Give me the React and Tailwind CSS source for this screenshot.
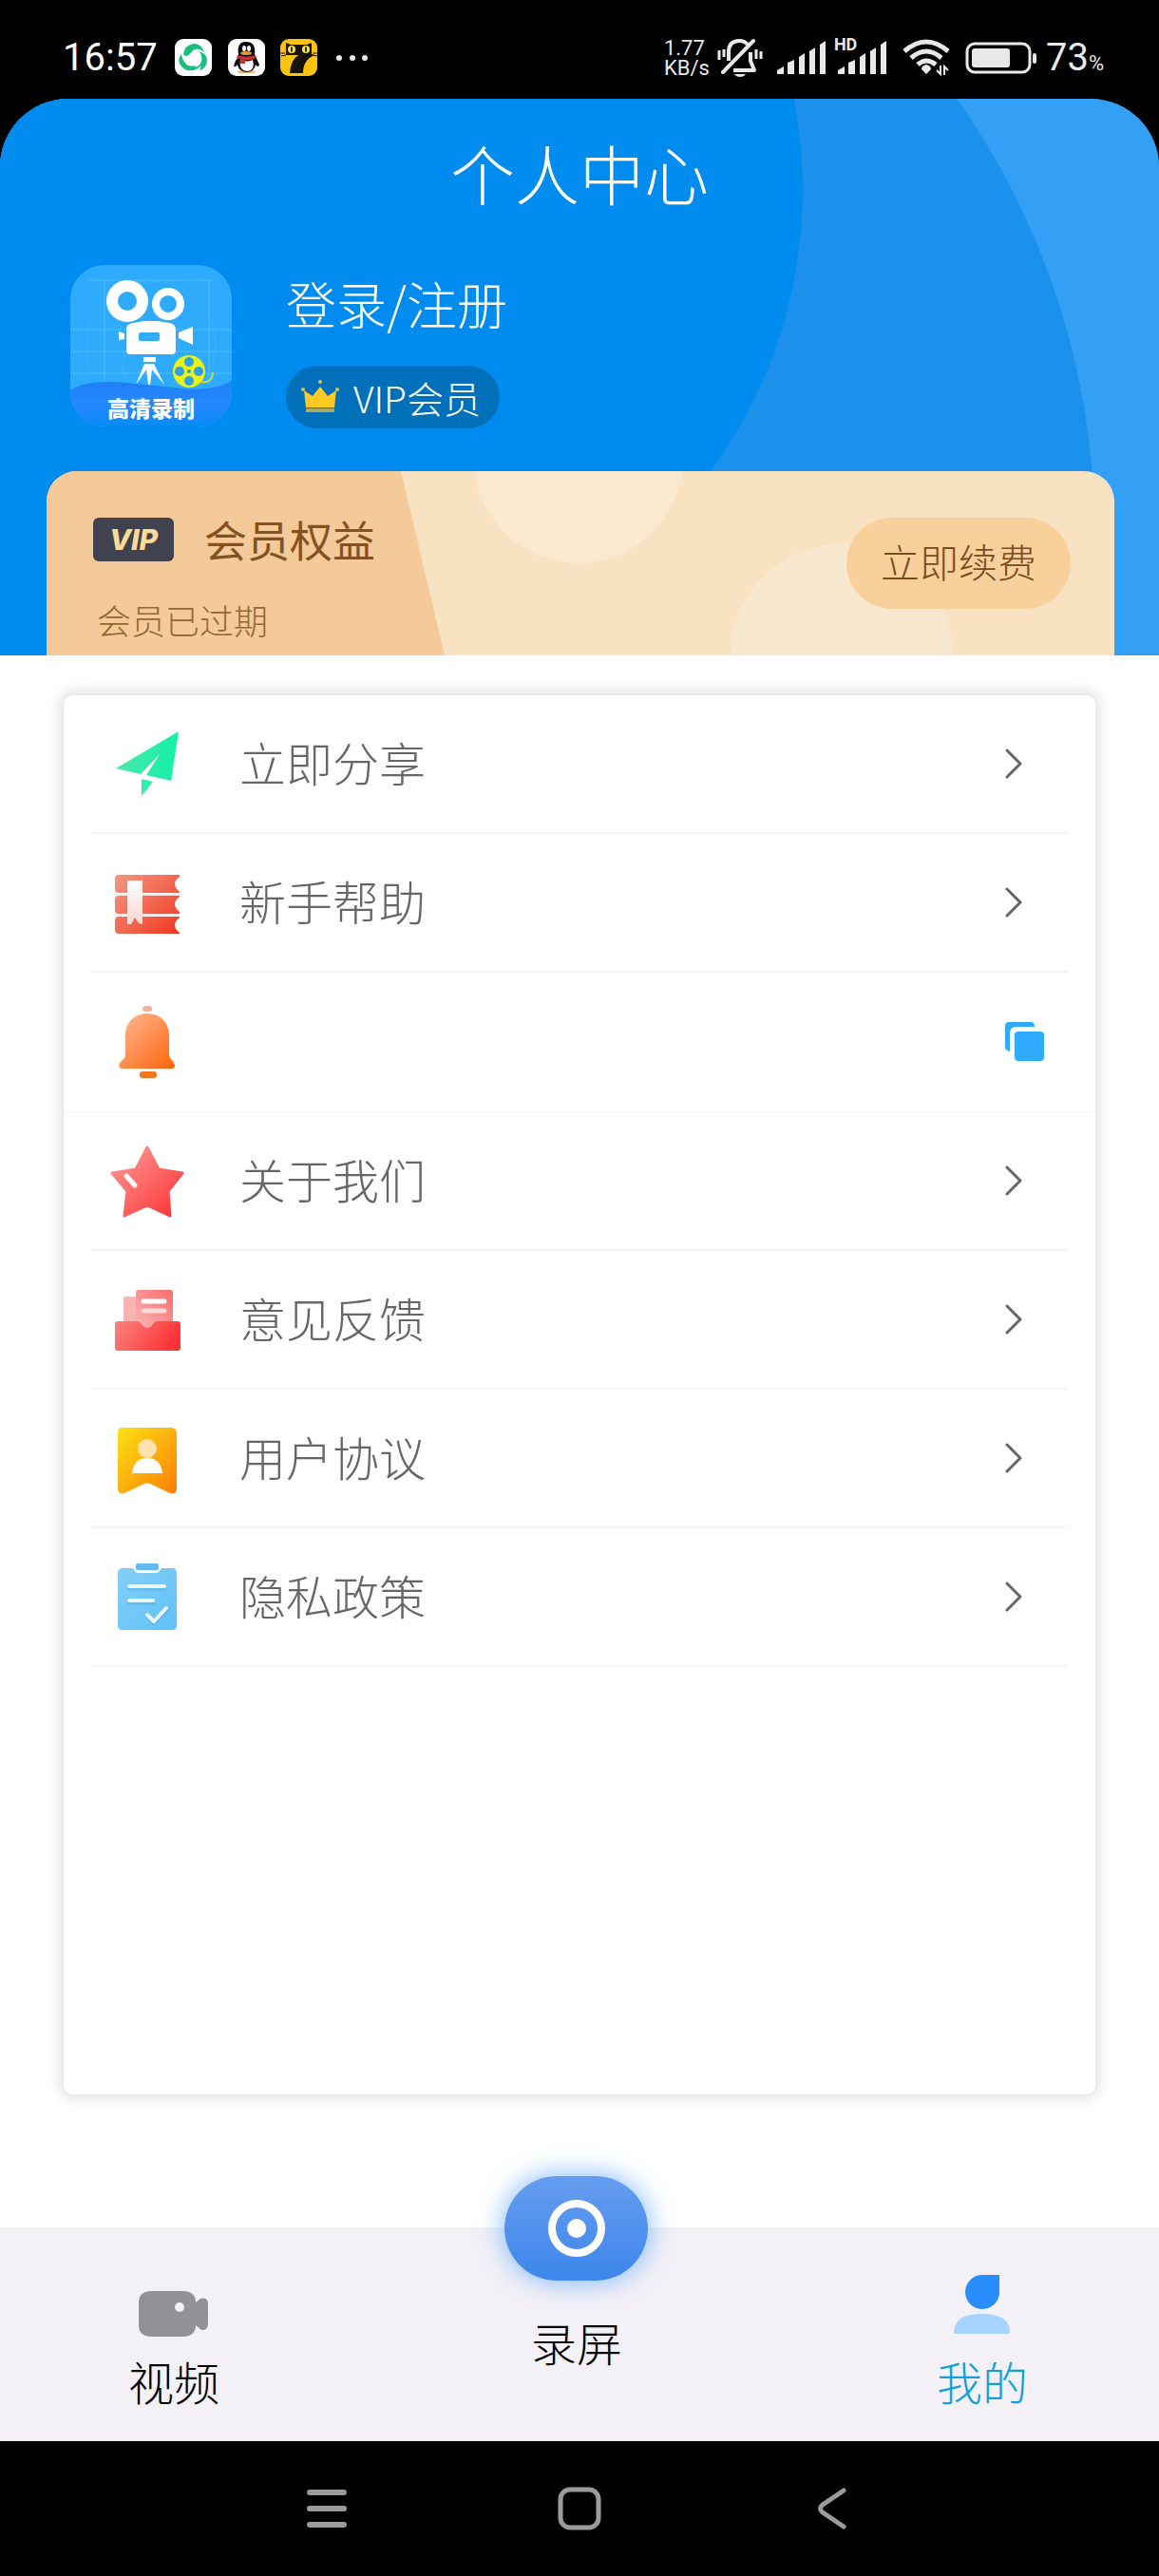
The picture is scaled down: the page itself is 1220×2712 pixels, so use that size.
import { useState } from 'react';

const PaperPlaneIcon = () => (
  <svg viewBox="0 0 80 80" className="w-20 h-20">
    <defs>
      <linearGradient id="plane" x1="0" y1="0" x2="1" y2="0">
        <stop offset="0" stopColor="#4be8ae" />
        <stop offset="1" stopColor="#14f0a6" />
      </linearGradient>
    </defs>
    <path d="M73 6 65 58 39 52 53 30 33 51 7 45Z" fill="url(#plane)" />
    <path d="M34 56 46 59 34 74Z" fill="#35edb0" />
  </svg>
);

const BooksIcon = () => (
  <svg viewBox="0 -2 80 80" className="w-20 h-20">
    <defs>
      <linearGradient id="books" gradientUnits="userSpaceOnUse" x1="8" y1="10" x2="70" y2="72">
        <stop offset="0" stopColor="#f59680" />
        <stop offset="1" stopColor="#f03a24" />
      </linearGradient>
      <linearGradient id="ribbon" x1="0" y1="0" x2="0" y2="1">
        <stop offset="0" stopColor="#fff" />
        <stop offset="1" stopColor="#fad6d2" />
      </linearGradient>
    </defs>
    <g fill="url(#books)">
      <path d="M10 9H74V11Q64 18 74 27V28H10Q6 28 6 24V13Q6 9 10 9Z" />
      <path d="M10 31H74V32Q64 40 74 48V50H10Q6 50 6 46V35Q6 31 10 31Z" />
      <path d="M10 53H74V54Q64 62 74 70V71H10Q6 71 6 67V57Q6 53 10 53Z" />
    </g>
    <path d="M6 29H74V31H6ZM6 50H74V52H6Z" fill="#fde3df" />
    <path d="M20 15H35V61L31 60 27 54 23 61H19V17Z" fill="url(#ribbon)" />
  </svg>
);

const BellIcon = () => (
  <svg viewBox="0 0 80 80" className="w-20 h-20">
    <defs>
      <linearGradient id="bell" x1="0" y1="0" x2="1" y2="1">
        <stop offset="0" stopColor="#ffb996" />
        <stop offset="1" stopColor="#ff6409" />
      </linearGradient>
    </defs>
    <rect x="35" y="2" width="10" height="6" rx="3" fill="#f5b19b" />
    <path
      d="M40 10C53 10 63 19 63 33V53Q63 56 65 58L68 62Q71 68 65 68H14Q9 68 11 62L15 58Q17 56 17 53V33C17 19 27 10 40 10Z"
      fill="url(#bell)"
    />
    <rect x="32" y="71" width="18" height="7" rx="3" fill="#f47522" />
  </svg>
);

const StarIcon = () => (
  <svg viewBox="0 -1 80 80" className="w-20 h-20">
    <defs>
      <linearGradient id="star" x1="0" y1="0" x2="1" y2="1">
        <stop offset="0.1" stopColor="#ff9391" />
        <stop offset="0.9" stopColor="#fd3b3c" />
      </linearGradient>
    </defs>
    <path
      d="M40 4 52 27 77 31 62 50 64 76 40 65 16 76 19 50 3 31 28 27Z"
      fill="url(#star)"
      stroke="url(#star)"
      strokeWidth="3"
      strokeLinejoin="round"
    />
    <path d="M18 34 27 44" stroke="#fff" strokeWidth="5" strokeLinecap="round" />
  </svg>
);

const InboxIcon = () => (
  <svg viewBox="0 -1 80 80" className="w-20 h-20">
    <defs>
      <linearGradient id="inbox" x1="0" y1="0" x2="1" y2="0.3">
        <stop offset="0" stopColor="#fb8480" />
        <stop offset="1" stopColor="#fb3537" />
      </linearGradient>
      <linearGradient id="sheet" x1="0" y1="1" x2="1" y2="0">
        <stop offset="0" stopColor="#fbbab8" />
        <stop offset="1" stopColor="#f96a6e" />
      </linearGradient>
    </defs>
    <rect x="15" y="15" width="22" height="35" rx="2" fill="#fbb3b2" />
    <rect x="28" y="8" width="39" height="44" rx="3" fill="url(#sheet)" />
    <path d="M36 20H58" stroke="#fff" strokeWidth="5" strokeLinecap="round" />
    <path d="M36 30H58" stroke="#fcd9d8" strokeWidth="5" strokeLinecap="round" />
    <path
      d="M9 41H29Q32 41 34 44 40 52 46 44 48 41 51 41H72Q75 41 75 44V69Q75 72 72 72H9Q6 72 6 69V44Q6 41 9 41Z"
      fill="url(#inbox)"
    />
  </svg>
);

const AgreementIcon = () => (
  <svg viewBox="0 -3 80 80" className="w-20 h-20">
    <defs>
      <linearGradient id="agreement" x1="0" y1="0" x2="1" y2="1">
        <stop offset="0" stopColor="#fae015" />
        <stop offset="0.5" stopColor="#fcb00d" />
        <stop offset="1" stopColor="#ff7e00" />
      </linearGradient>
    </defs>
    <path
      d="M14 5H65Q71 5 71 11V69Q71 76 64 74L45 65Q40 62 35 65L16 74Q9 76 9 69V10Q9 5 14 5Z"
      fill="url(#agreement)"
    />
    <path d="M24 53Q26 37 40 37T56 53Z" fill="#fff" />
    <circle cx="40" cy="27" r="10" fill="#fde2ae" />
  </svg>
);

const ClipboardIcon = () => (
  <svg viewBox="0 0 80 80" className="w-20 h-20">
    <defs>
      <linearGradient id="board" x1="0" y1="0" x2="1" y2="1">
        <stop offset="0" stopColor="#85cff7" />
        <stop offset="1" stopColor="#5fc1f8" />
      </linearGradient>
    </defs>
    <path
      d="M14 10H24Q26 10 27 13 28 15 31 15H49Q52 15 53 13L55 10H66Q71 10 71 15V70Q71 75 66 75H14Q9 75 9 70V15Q9 10 14 10Z"
      fill="url(#board)"
    />
    <rect x="28" y="5" width="24" height="7" rx="2" fill="#62b9f1" />
    <g fill="none" stroke="#3f9fd6" strokeOpacity="0.35" strokeWidth="5" strokeLinecap="round" strokeLinejoin="round">
      <path d="M21 31H58M21 46H46M41 60 47 67 61 54" />
    </g>
    <g fill="none" stroke="#e9f7ff" strokeWidth="4" strokeLinecap="round" strokeLinejoin="round">
      <path d="M21 29H58M21 44H46M40 59 47 66 60 52" />
    </g>
  </svg>
);

const ChevronIcon = () => (
  <svg viewBox="0 0 20 32" className="w-5 h-8 mr-7">
    <path d="M3 2 17 16 3 30" fill="none" stroke="#666" strokeWidth="3" strokeLinecap="round" strokeLinejoin="round" />
  </svg>
);

const CopyIcon = () => (
  <svg viewBox="0 0 42 42" className="w-[42px] h-[42px] mr-[5px]">
    <path d="M4 0H27Q31 0 31 5H12Q5 5 5 12V31Q0 30 0 26V4Q0 0 4 0Z" fill="#2fabfd" />
    <rect x="10" y="10" width="31" height="31" rx="4" fill="#2fabfd" />
  </svg>
);

const menu = [
  { icon: PaperPlaneIcon, label: '立即分享' },
  { icon: BooksIcon, label: '新手帮助' },
  { icon: BellIcon, label: '', copy: true },
  { icon: StarIcon, label: '关于我们' },
  { icon: InboxIcon, label: '意见反馈' },
  { icon: AgreementIcon, label: '用户协议' },
  { icon: ClipboardIcon, label: '隐私政策' },
];

const SignalIcon = () => (
  <svg viewBox="0 0 52 35" className="w-[52px] h-[35px]" fill="#e8e8e8">
    <path d="M0 35V31L7 27V35Z" />
    <path d="M11 35V23L18 20V35Z" />
    <path d="M23 35V17L29 13V35Z" />
    <path d="M34 35V11L40 7V35Z" />
    <path d="M45 35V4L51 0V35Z" />
  </svg>
);

const StatusBar = () => (
  <div className="h-[104px] bg-black text-[#e8e8e8] flex items-center justify-between pl-[66px] pr-[58px] pt-[17px] font-['Roboto','Noto_Sans_CJK_SC',sans-serif]">
    <div className="flex items-center">
      <span className="text-[40px] leading-[44px] text-white mr-[18px]">16:57</span>
      <svg viewBox="0 0 40 40" className="w-10 h-10 mr-4">
        <rect width="39" height="39" rx="9" fill="#fff" />
        <g fill="#18be7c">
          <path d="M9 17Q10 6 20 5 28 5 31 14 25 8 19 12 16 17 12 18Z" />
          <path d="M7 16Q8 24 14 28 18 29 22 28L20 33Q10 35 5 26 3 20 7 16Z" />
          <path d="M20 30Q30 28 28 18 28 15 25 13 32 14 34 21 34 31 26 33L28 28Q24 32 20 33Z" />
        </g>
      </svg>
      <svg viewBox="0 0 40 40" className="w-10 h-10 mr-[15px]">
        <rect width="39" height="39" rx="9" fill="#fff" />
        <path d="M10 34Q20 31 29 34L28 36H11Z" fill="#f0b878" />
        <path d="M11 16Q9 3 19 3 30 3 28 16L33 27Q32 31 29 27 28 34 20 35 11 34 10 27 7 31 6 28 7 23 11 19Z" fill="#0b0b10" />
        <path d="M13 22Q20 25 26 22 29 33 20 34 11 33 13 22Z" fill="#fff" />
        <ellipse cx="17" cy="10" rx="2" ry="3" fill="#fff" />
        <ellipse cx="22" cy="10" rx="2" ry="3" fill="#fff" />
        <ellipse cx="19" cy="15" rx="6" ry="2" fill="#e8992e" />
        <path d="M10 17Q20 20 29 17L30 20Q24 23 18 22V26H13V21L9 20Z" fill="#c9302c" />
      </svg>
      <svg viewBox="0 0 40 40" className="w-10 h-10">
        <rect width="39" height="39" rx="9" fill="#fcc30d" />
        <path d="M6 4 11 6H28L33 4V16L36 17Q24 22 24 36H10Q11 22 19 17H6Z" fill="#171307" />
        <ellipse cx="12" cy="11" rx="4" ry="4" fill="#f4e355" />
        <ellipse cx="27" cy="11" rx="4" ry="4" fill="#f4e355" />
        <ellipse cx="12" cy="11" rx="1" ry="3" fill="#171307" />
        <ellipse cx="27" cy="11" rx="1" ry="3" fill="#171307" />
        <path d="M0 15H5M1 18 6 17M34 15H39M34 17 39 18" stroke="#171307" />
      </svg>
      <svg viewBox="0 0 34 8" className="w-[34px] h-2 ml-[19px]" fill="#e8e8e8">
        <circle cx="3" cy="4" r="3" />
        <circle cx="17" cy="4" r="3" />
        <circle cx="30" cy="4" r="3" />
      </svg>
    </div>

    <div className="flex items-center">
      <div className="text-[22px] leading-[21px] mr-2">
        <div>1.77</div>
        <div>KB/s</div>
      </div>
      {/* muted bell */}
      <svg viewBox="0 0 48 42" className="w-12 h-[42px] mr-[15px]" fill="none" stroke="#e8e8e8" strokeWidth="4">
        <path d="M12 24V15Q12 3 23 3 29 3 32 7M35 15V24L39 34H17" strokeLinejoin="round" />
        <path d="M38 3 6 36" strokeLinecap="round" />
        <path d="M2 13V23M7 12V20M41 12V22M46 14V22" strokeWidth="3" />
        <path d="M18 38H30Q28 41 24 41T18 38Z" fill="#e8e8e8" stroke="none" />
      </svg>
      <SignalIcon />
      <div className="relative ml-3">
        <SignalIcon />
        <span className="absolute -left-1 -top-1 text-[18px] leading-4 font-bold">HD</span>
      </div>
      <svg viewBox="0 0 50 42" className="w-[50px] h-[42px] ml-4" fill="none" stroke="#e8e8e8" strokeWidth="5">
        <path d="M2 14Q25-6 48 14" />
        <path d="M9 21Q25 7 41 21" />
        <path d="M16 28Q25 20 35 28" />
        <path d="M25 28Q30 29 30 33L25 38 20 33Q20 29 25 28Z" fill="#e8e8e8" stroke="none" />
        <path d="M36 34 40 38V29M48 34 44 30V39" strokeWidth="2" />
      </svg>
      <svg viewBox="0 0 76 34" className="w-[76px] h-[34px] ml-4">
        <rect x="2" y="2" width="66" height="30" rx="8" fill="none" stroke="#e8e8e8" strokeWidth="3" />
        <rect x="7" y="7" width="40" height="20" rx="3" fill="#e8e8e8" />
        <rect x="71" y="12" width="4" height="11" rx="2" fill="#e8e8e8" />
      </svg>
      <span className="flex items-baseline ml-[9px]">
        <span className="text-[40px] leading-[44px]">73</span>
        <span className="text-[22px] leading-none">%</span>
      </span>
    </div>
  </div>
);

const AppLogo = () => (
  <svg viewBox="0 0 170 170" className="w-[170px] h-[170px] rounded-[36px] shrink-0">
    <defs>
      <linearGradient id="wave" x1="0" y1="0" x2="0" y2="1">
        <stop offset="0" stopColor="#1e80f4" />
        <stop offset="0.5" stopColor="#2688ff" />
        <stop offset="1" stopColor="#088bf3" />
      </linearGradient>
    </defs>
    <rect width="170" height="170" fill="#2fabfd" />
    <g fill="none" stroke="#66c4fe" strokeOpacity="0.6">
      <path d="M0 68H170M0 91H170M0 114H170M36 16V125M146 16V125M20 16H150" />
      <circle cx="85" cy="85" r="68" strokeOpacity="0.3" />
      <circle cx="85" cy="105" r="30" strokeOpacity="0.4" />
    </g>
    <circle cx="60" cy="38" r="16" fill="none" stroke="#fff" strokeWidth="12" />
    <circle cx="103" cy="41" r="13" fill="none" stroke="#fff" strokeWidth="8" />
    <path
      d="M66 61 78 59H92L104 61Q111 62 111 68V90Q111 94 107 94H63Q59 94 59 90V66Q60 62 66 61ZM74 71Q72 71 72 73V78Q72 80 74 80H92Q94 80 94 78V73Q94 71 92 71Z"
      fill="#fff"
      fillRule="evenodd"
    />
    <path d="M51 70 57 72V78L51 79ZM129 65V84L114 77V71Z" fill="#fff" />
    <path d="M77 97H90V102H77ZM78 104H88L99 126 86 110 84 126H82L80 110 69 126Z" fill="#fff" />
    <circle cx="125" cy="112" r="17" fill="#e8f314" />
    <path d="M138 123Q149 125 150 113" fill="none" stroke="#c8db3a" strokeWidth="2" />
    <g fill="#2fa0e0">
      <circle cx="125" cy="102" r="5" />
      <circle cx="125" cy="122" r="5" />
      <circle cx="115" cy="112" r="5" />
      <circle cx="135" cy="112" r="5" />
      <circle cx="125" cy="112" r="2" />
    </g>
    <path d="M0 132Q18 120 60 124T125 131Q155 131 170 122V170H0Z" fill="url(#wave)" />
    <text x="85" y="160" textAnchor="middle" className="text-[23px] font-black font-['Noto_Sans_CJK_SC',sans-serif]" fill="#fff">
      高清录制
    </text>
  </svg>
);

const Header = () => (
  <header className="bg-black">
    <div className="relative h-[586px] flex flex-col bg-[#008cee] rounded-t-[72px] overflow-hidden">
      <svg viewBox="0 104 1220 586" preserveAspectRatio="none" className="absolute inset-0 w-full h-full">
        <rect y="104" width="1220" height="586" fill="#339ff5" />
        <circle cx="362" cy="560" r="790" fill="#1b91eb" />
        <path d="M0 104H400V690H0Z" fill="#008cee" />
        <circle cx="345" cy="200" r="500" fill="#008cee" />
        <path d="M0 490H720V690H0Z" fill="#008cee" />
      </svg>

      <h1 className="relative text-[68px] leading-[96px] font-light text-white text-center mt-[30px]">个人中心</h1>

      <div className="relative flex items-start pl-[74px] mt-[49px]">
        <AppLogo />
        <div className="flex flex-col items-start ml-[57px] mt-1.5">
          <button className="text-[53px] leading-[68px] font-light text-white">登录/注册</button>
          <span className="flex items-center h-[66px] mt-8 pl-4 pr-5 rounded-full bg-[#0070bb] text-white">
            <svg viewBox="0 0 40 38" className="w-10 h-[38px] mr-[15px]">
              <path d="M3 12 12 18 20 8 28 18 37 12 35 30H5Z" fill="#ffcb22" />
              <path d="M5 31H35V35H5Z" fill="#a9ab62" />
              <g fill="#d8bf55">
                <circle cx="2" cy="11" r="2" />
                <circle cx="20" cy="3" r="2" />
                <circle cx="38" cy="11" r="2" />
              </g>
            </svg>
            <span className="text-[39px] leading-[56px] font-light">VIP会员</span>
          </span>
        </div>
      </div>

      <section className="relative flex-1 mt-[45px] ml-[49px] mr-[47px] rounded-t-[32px] overflow-hidden bg-[#f9e2c1] flex items-start justify-between pl-[49px] pr-[46px]">
        <svg viewBox="0 0 1124 194" preserveAspectRatio="none" className="absolute inset-0 w-full h-full">
          <path d="M0 0H373L419 194H0Z" fill="#f4ca9a" />
          <circle cx="560" cy="-13" r="110" fill="#fae8cf" />
          <circle cx="837" cy="194" r="117" fill="#f9e8d0" />
        </svg>
        <div className="relative">
          <div className="flex items-center mt-[42px]">
            <span className="w-[85px] h-[46px] rounded-md bg-[#40434f] text-[#fbd997] text-[30px] leading-[46px] font-extrabold italic text-center font-['Inter',sans-serif]">
              VIP
            </span>
            <h2 className="text-[45px] leading-[60px] text-[#85511f] ml-8">会员权益</h2>
          </div>
          <p className="text-[36px] leading-[48px] font-light text-[#9b6631] mt-[30px] ml-1">会员已过期</p>
        </div>
        <button className="relative h-24 mt-[49px] px-9 pb-1 rounded-full bg-[#f7d09c] text-[#7d4a1a] text-[41px] font-light">
          立即续费
        </button>
      </section>
    </div>
  </header>
);

const MenuRow = ({ item }) => {
  const Icon = item.icon;
  return (
    <li className={item.copy ? 'border-b border-[#f6f6f6]' : 'mx-[29px] border-b-2 border-[#f4f4f4]'}>
      <button
        aria-label={item.label || '复制'}
        className={`w-full flex items-center text-left ${item.copy ? 'h-[146px] px-[48px]' : 'h-36 px-[19px]'}`}
      >
        <Icon />
        <span className="flex-1 text-[49px] leading-[64px] pb-1 font-light text-[#666] ml-[57px]">{item.label}</span>
        {item.copy ? <CopyIcon /> : <ChevronIcon />}
      </button>
    </li>
  );
};

const TabBar = ({ tab, setTab }) => (
  <nav className="h-[225px] bg-[#f3f0f6] border-t-[5px] border-[#f0f0f0] flex text-[48px] leading-[64px] font-light">
    <button
      onClick={() => setTab('video')}
      className={`w-[30%] flex flex-col items-center pt-[62px] ${tab === 'video' ? 'text-[#0fa0dc]' : 'text-black'}`}
    >
      <svg viewBox="0 0 74 48" className="w-[74px] h-12 mb-3.5" fill="#929196">
        <path d="M14 0H46Q60 0 60 12L65 8Q73 6 73 14V34Q73 42 66 41L60 36Q60 48 46 48H14Q0 48 0 36V12Q0 0 14 0Z" />
        <circle cx="43" cy="17" r="5" fill="#f3f0f6" />
      </svg>
      视频
    </button>
    <button onClick={() => setTab('record')} className="flex-1 flex flex-col items-center text-black">
      <span className="-mt-[59px] mb-8 w-[151px] h-[110px] shrink-0 rounded-[55px] bg-gradient-to-b from-[#669df0] to-[#3c86ec] shadow-[0_0_24px_4px_rgba(110,175,255,0.7)] flex items-center justify-center">
        <svg viewBox="0 0 60 60" className="w-[60px] h-[60px]">
          <circle cx="30" cy="30" r="26" fill="none" stroke="#fff" strokeWidth="8" />
          <circle cx="30" cy="30" r="10" fill="#fff" />
        </svg>
      </span>
      录屏
    </button>
    <button
      onClick={() => setTab('mine')}
      className={`w-[30.5%] flex flex-col items-center pt-[45px] ${tab === 'mine' ? 'text-[#0fa0dc]' : 'text-black'}`}
    >
      <svg viewBox="0 0 60 62" className="w-[60px] h-[62px] mb-[17px]">
        <path d="M30 0H48V19A18 18 0 1 1 30 0Z" fill="#2a8dfc" />
        <path d="M2 62Q0 62 0 59 2 41 30 41T59 59Q59 62 57 62Z" fill="#a6d3ff" />
      </svg>
      我的
    </button>
  </nav>
);

const SystemNav = () => (
  <div className="h-[142px] bg-black flex items-center justify-center gap-[218px]">
    <button aria-label="菜单">
      <svg viewBox="0 0 48 48" className="w-12 h-12" stroke="#9b9b9b" strokeWidth="6" strokeLinecap="round">
        <path d="M6 7H42M6 24H42M6 41H42" />
      </svg>
    </button>
    <button aria-label="主页">
      <svg viewBox="0 0 48 48" className="w-12 h-12" fill="none" stroke="#9b9b9b" strokeWidth="5">
        <rect x="4" y="4" width="40" height="40" rx="10" />
      </svg>
    </button>
    <button aria-label="返回">
      <svg viewBox="0 0 48 48" className="w-12 h-12" fill="none" stroke="#9b9b9b" strokeWidth="5" strokeLinecap="round">
        <path d="M36 5 14 20Q9 24 14 28L36 43" />
      </svg>
    </button>
  </div>
);

const App = () => {
  const [tab, setTab] = useState('mine');

  return (
    <div className="min-h-screen flex flex-col bg-white font-['Noto_Sans_CJK_SC',sans-serif]">
      <StatusBar />
      <Header />

      <main className="flex-1 flex flex-col px-[67px] pt-[42px] pb-[140px]">
        <ul className="flex-1 rounded-[10px] bg-white shadow-[0_0_16px_3px_rgba(0,0,0,0.14)]">
          {menu.map((item, i) => (
            <MenuRow key={i} item={item} />
          ))}
        </ul>
      </main>

      <TabBar tab={tab} setTab={setTab} />
      <SystemNav />
    </div>
  );
};

export default App;
